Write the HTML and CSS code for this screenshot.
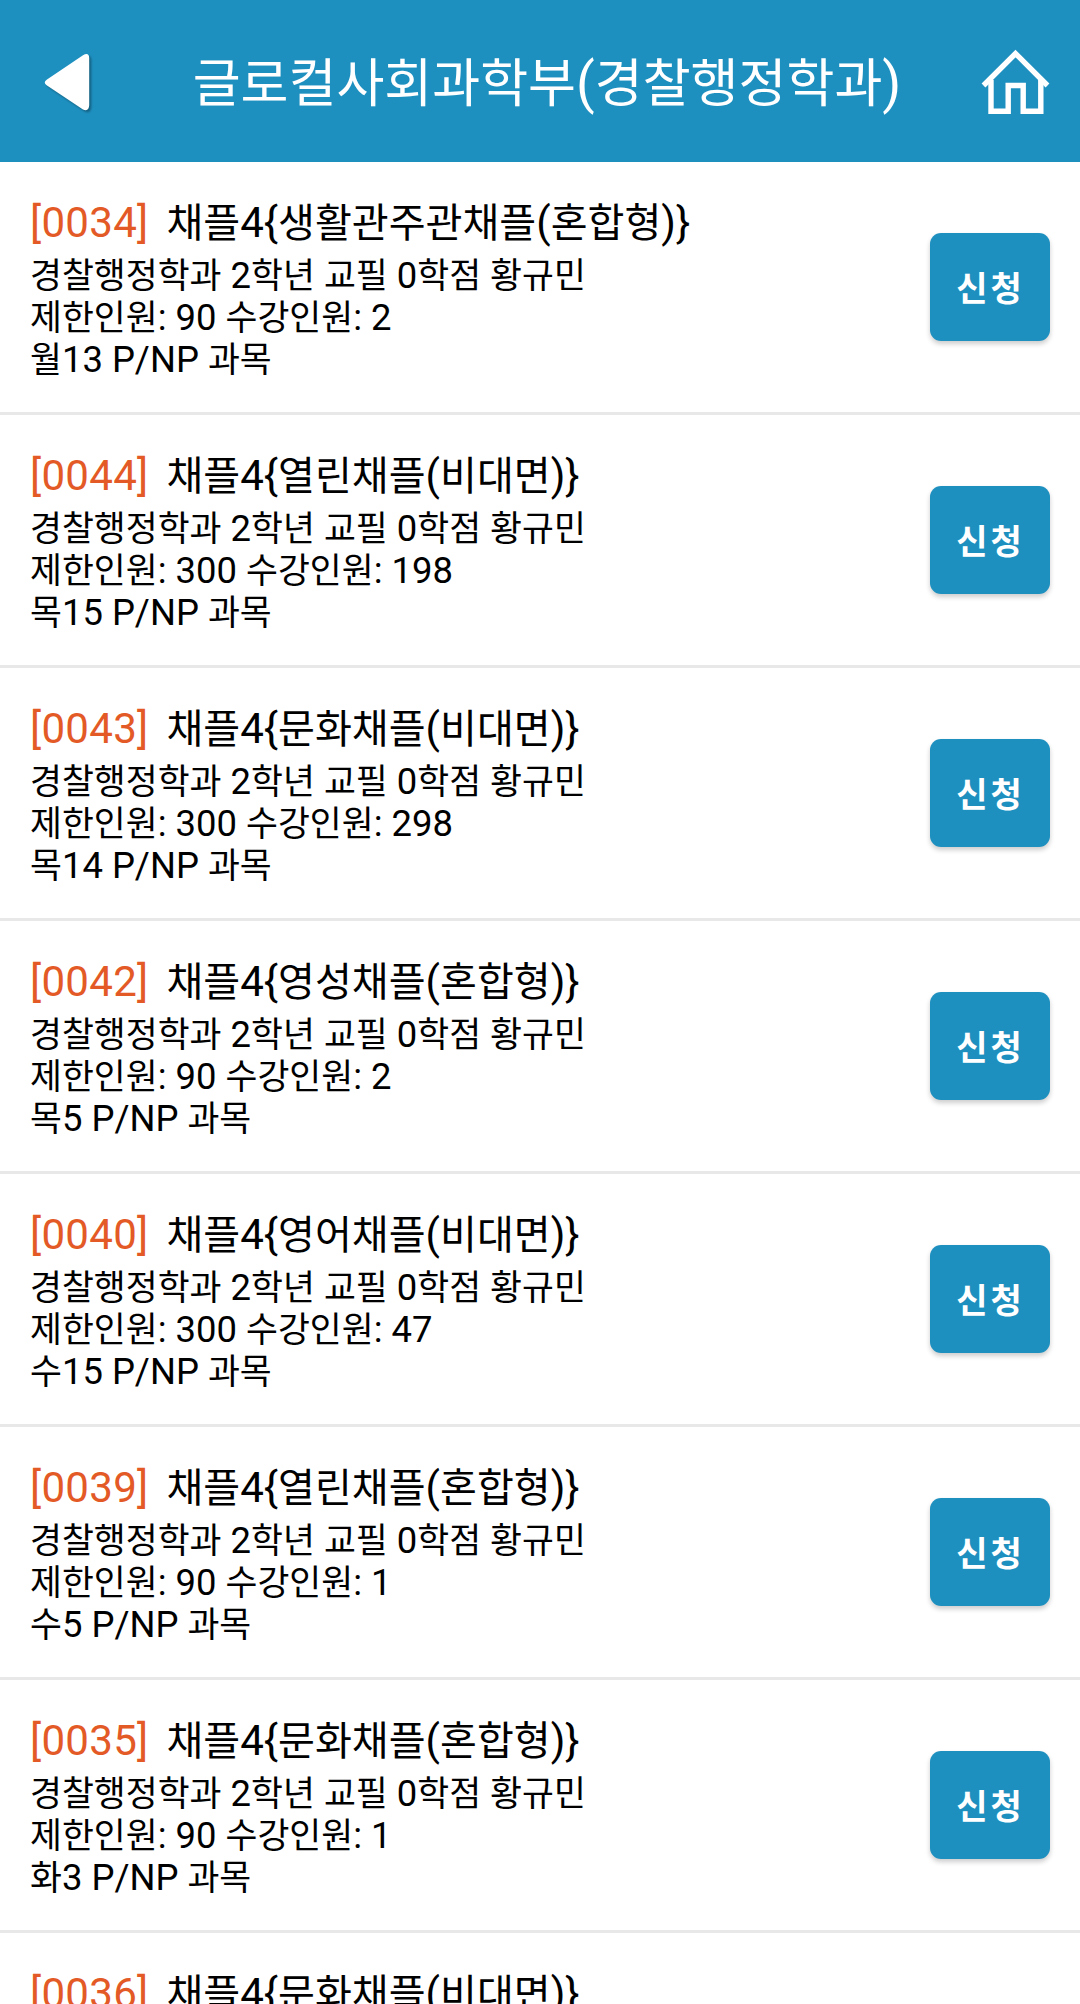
FILE: index.html
```html
<!DOCTYPE html>
<html lang="ko"><head><meta charset="utf-8"><title>수강신청</title><link rel="stylesheet" href="styles.css"></head>
<body>
<header class="bar">
<svg class="back" width="50" height="64" viewBox="0 0 50 64"><path d="M7 29.500 43 5.200Q49 2 49.200 8V55Q49 62 43 59.500L7 35.500Q2.500 32.500 7 29.500Z" fill="#fff"/></svg>
<h1 class="title">글로컬사회과학부<span class="latin">(</span>경찰행정학과<span class="latin">)</span></h1>
<svg class="home" width="70" height="68" viewBox="0 0 70 68" fill="none" stroke="#fff" stroke-width="5.400"><path d="M3.500 38.500 35.500 6.500 67.500 38.500"/><path d="M11 33V64.200H28.200V38.500H43.200V64.200H60.800V33"/></svg>
</header>
<main class="list" id="list"></main>
<script src="app.js"></script>
</body></html>
```
FILE: styles.css
```css
*{box-sizing:border-box}
body{margin:0;height:2004px;overflow:hidden;display:flex;flex-direction:column;font-family:Roboto,"Noto Sans CJK KR",sans-serif;color:#000;background:#fff}
.bar{flex:none;height:162px;background:#1e90c0;color:#fff;display:flex;align-items:center;justify-content:space-between;padding:3px 30px 0 40px}
.back{margin-bottom:2px;filter:drop-shadow(2px 2px 1px #0005)}
.home{margin-bottom:3px}
.title{margin:0;padding:2px 0 0 24px;font-size:52.1px;font-weight:400;line-height:60px}
.latin{font-size:1.05em}
.list{flex:1;min-height:0;overflow:hidden}
.course{height:253px;border-bottom:3px solid #e8e8e8;display:flex;justify-content:space-between;padding:37px 30px 0}
.name{display:flex;gap:18px;font-size:40.1px;line-height:48px;margin-bottom:7px}
.code{color:#e35a26;letter-spacing:.25px}
.line{font-size:34.7px;line-height:42px}
.apply{width:120px;height:108px;margin-top:34px;padding:0 0 2px 1px;border:0;border-radius:11px;background:#1e90c0;color:#fff;font:700 34px Roboto,"Noto Sans CJK KR",sans-serif;letter-spacing:3px;box-shadow:0 3px 5px #0003}
```
FILE: app.js
```js
const courses=[["0034","생활관주관채플(혼합형)",90,2,"월13"],["0044","열린채플(비대면)",300,198,"목15"],["0043","문화채플(비대면)",300,298,"목14"],["0042","영성채플(혼합형)",90,2,"목5"],["0040","영어채플(비대면)",300,47,"수15"],["0039","열린채플(혼합형)",90,1,"수5"],["0035","문화채플(혼합형)",90,1,"화3"],["0036","문화채플(비대면)",300,0,"화13"]];
// Digits, Latin letters and punctuation are set slightly larger than the Hangul.
const mix=s=>s.replace(/[^가-힣]+/g,'<span class="latin">$&</span>');
const line=s=>`<div class="line">${mix(s)}</div>`;
// Only the title of the last course fits in the window.
document.getElementById("list").innerHTML=courses.map(([c,n,l,e,t],i)=>`<article class="course"><div><div class="name"><span class="code">${mix(`[${c}]`)}</span><span>${mix(`채플4{${n}}`)}</span></div>${i<7?line("경찰행정학과 2학년 교필 0학점 황규민")+line(`제한인원: ${l} 수강인원: ${e}`)+line(`${t} P/NP 과목`):""}</div>${i<7?'<button class="apply">신청</button>':""}</article>`).join("");
```
